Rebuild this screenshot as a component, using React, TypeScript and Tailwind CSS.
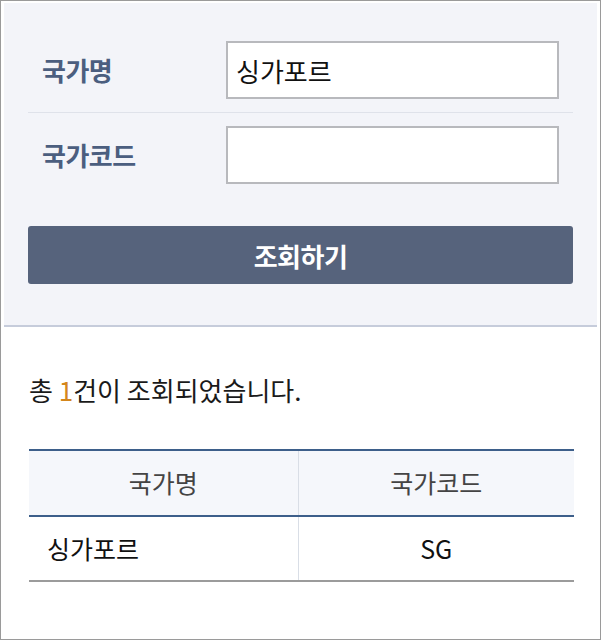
import React from 'react';

const font = { fontFamily: '"Noto Sans CJK KR", "Noto Sans", sans-serif' };

const rows = [{ name: '싱가포르', code: 'SG' }];

export default function App() {
    return (
        <div className="w-[601px] h-[640px] border border-[#9a9a9a] bg-white overflow-hidden" style={font}>
            {/* 검색 영역 */}
            <div className="mt-[2px] mx-[3px] bg-[#f3f4f9] border-b-2 border-[#c6ccdb] px-6 pt-[25px] pb-[41px]">
                <div className="flex items-center py-[13px] border-b border-[#dfe2ea]">
                    <div className="w-[198px] pl-[14px] text-[26px] leading-none font-bold tracking-[-0.5px] text-[#4b5e7f]">국가명</div>
                    <input
                        className="w-[333px] h-[58px] border-2 border-[#b8b9bd] bg-white px-[8px] text-[26px] text-[#111] outline-none"
                        defaultValue="싱가포르"
                    />
                </div>
                <div className="flex items-center py-[13px]">
                    <div className="w-[198px] pl-[14px] text-[26px] leading-none font-bold tracking-[-0.5px] text-[#4b5e7f]">국가코드</div>
                    <input className="w-[333px] h-[58px] border-2 border-[#b8b9bd] bg-white px-[8px] text-[26px] outline-none" />
                </div>
                <button className="mt-[29px] w-full h-[58px] rounded-[3px] bg-[#56637c] text-white text-[26px] font-bold tracking-[-0.5px]">
                    조회하기
                </button>
            </div>

            {/* 결과 영역 */}
            <div className="px-[28px]">
                <p className="mt-[48px] text-[26px] leading-[30px] text-[#1a1a1a]">
                    총 <span className="text-[#d4861c]">1</span>건이 조회되었습니다.
                </p>
                <table className="mt-[44px] w-[545px] border-collapse text-[25px]">
                    <thead>
                        <tr className="bg-[#f5f7fb] border-t-2 border-b-2 border-[#3d5f8a]">
                            <th className="w-[269px] h-[66px] font-normal text-[#444] border-r border-[#d9dee6]">국가명</th>
                            <th className="h-[66px] font-normal text-[#444]">국가코드</th>
                        </tr>
                    </thead>
                    <tbody>
                        {rows.map(r => (
                            <tr key={r.code} className="border-b-2 border-[#9b9b9b]">
                                <td className="h-[65px] pl-[18px] text-left text-[#111] border-r border-[#d9dee6]">{r.name}</td>
                                <td className="h-[65px] text-center text-[#111]">{r.code}</td>
                            </tr>
                        ))}
                    </tbody>
                </table>
            </div>
        </div>
    );
}
